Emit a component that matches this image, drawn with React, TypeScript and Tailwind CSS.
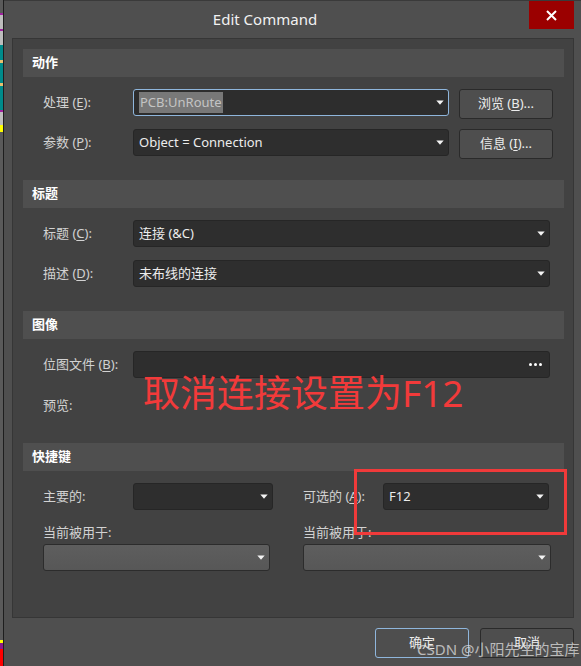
import React from 'react';

const Arrow = () => (
  <svg width="8" height="5" viewBox="0 0 8 5" className="shrink-0">
    <path d="M0.3 0.4h7.4L4 4.7z" fill="#f4f4f4" />
  </svg>
);

const Mn = ({ pre, k, post = ':' }: { pre: string; k: string; post?: string }) => (
  <span>
    {pre} (<span className="underline underline-offset-2">{k}</span>){post}
  </span>
);

const Select = ({
  width,
  value,
  focused,
  disabled,
  selected,
  dots,
}: {
  width: string;
  value?: string;
  focused?: boolean;
  disabled?: boolean;
  selected?: boolean;
  dots?: boolean;
}) => (
  <div
    className={`flex h-[27px] items-center justify-between rounded-[3px] border pl-[5px] pr-[4px] text-[13px] ${width} ${
      focused
        ? 'border-[#8fb6dc] bg-[#2d2d2d]'
        : disabled
        ? 'border-[#2c2c2c] bg-gradient-to-b from-[#5e5e5e] to-[#575757]'
        : 'border-[#262626] bg-[#2e2e2e]'
    }`}
  >
    <span
      className={`leading-[21px] ${selected ? 'bg-[#787878] px-px text-[#c4c4c4]' : 'text-[#ececec]'}`}
    >
      {value}
    </span>
    {dots ? (
      <span className="flex gap-[2px] pr-[3px]">
        <span className="h-[3px] w-[3px] rounded-full bg-white" />
        <span className="h-[3px] w-[3px] rounded-full bg-white" />
        <span className="h-[3px] w-[3px] rounded-full bg-white" />
      </span>
    ) : (
      <Arrow />
    )}
  </div>
);

const Button = ({ children, focused, className = '' }: { children: React.ReactNode; focused?: boolean; className?: string }) => (
  <div
    className={`flex h-[30px] w-[94px] items-center justify-center rounded-[3px] border bg-[#4e4e4e] text-[13px] text-[#ececec] ${
      focused ? 'border-[#8fb6dc]' : 'border-[#2a2a2a]'
    } ${className}`}
  >
    {children}
  </div>
);

const Header = ({ title, className = '' }: { title: string; className?: string }) => (
  <div className={`flex h-[28px] items-center bg-[#4f4f4f] pl-[9px] text-[13px] font-bold text-white ${className}`}>
    {title}
  </div>
);

const Label = ({ children, className = 'w-[90px]' }: { children: React.ReactNode; className?: string }) => (
  <div className={`flex h-[27px] shrink-0 items-center text-[13px] text-[#d2d2d2] ${className}`}>{children}</div>
);

const AppStrip = () => (
  <div className="flex w-[3px] flex-col">
    <div className="h-[13px] bg-[#5a5a5a]" />
    <div className="h-[2px] bg-[#a020a0]" />
    <div className="h-[14px] bg-[#bdbdbd]" />
    <div className="h-[2px] bg-[#a020a0]" />
    <div className="h-[14px] bg-[#bdbdbd]" />
    <div className="h-[15px] bg-[#008b8b]" />
    <div className="h-[3px] bg-[#e8c070]" />
    <div className="h-[20px] bg-[#008b8b]" />
    <div className="h-[3px] bg-[#e8c070]" />
    <div className="h-[24px] bg-[#008b8b]" />
    <div className="h-[2px] bg-[#a020a0]" />
    <div className="h-[13px] bg-[#bdbdbd]" />
    <div className="h-[7px] bg-[#ffff00]" />
    <div className="flex-1 bg-[#5a5a5a]" />
    <div className="h-[3px] bg-[#ffff00]" />
    <div className="h-[6px] bg-[#8a1a8a]" />
    <div className="h-[17px] bg-[#ff0000]" />
  </div>
);

export default function App() {
  return (
    <div className="relative flex h-[666px] w-[581px] overflow-hidden bg-[#4f4f4f] font-['Noto_Sans','Noto_Sans_CJK_SC',sans-serif]">
      <AppStrip />
      <div className="w-px bg-[#1e1e1e]" />
      <div className="flex flex-1 flex-col border-t border-[#3a3a3a] pl-2 pr-[7px]">
        {/* title bar */}
        <div className="flex h-[37px] items-start">
          <div className="flex h-[36px] flex-1 items-center justify-center pr-[11px] text-[15px] text-[#f2f2f2]">
            Edit Command
          </div>
          <div className="flex h-[28px] w-[45px] items-center justify-center bg-[#9b0000]">
            <svg width="11" height="11" viewBox="0 0 11 11">
              <path d="M1 1l9 9M10 1l-9 9" stroke="#fff" strokeWidth="2" />
            </svg>
          </div>
        </div>

        {/* main panel */}
        <div className="h-[580px] border border-[#363636] bg-[#424242] pl-[10px] pr-[9px] pt-[10px]">
          <Header title="动作" />
          <div className="mt-3 flex items-start pl-5">
            <Label><Mn pre="处理" k="E" /></Label>
            <Select width="w-[316px]" value="PCB:UnRoute" focused selected />
            <Button className="ml-[10px]"><Mn pre="浏览" k="B" post="..." /></Button>
          </div>
          <div className="mt-[10px] flex items-start pl-5">
            <Label><Mn pre="参数" k="P" /></Label>
            <Select width="w-[316px]" value="Object = Connection" />
            <Button className="ml-[10px]"><Mn pre="信息" k="I" post="..." /></Button>
          </div>

          <Header title="标题" className="mt-[21px]" />
          <div className="mt-3 flex items-start pl-5">
            <Label><Mn pre="标题" k="C" /></Label>
            <Select width="w-[417px]" value="连接 (&C)" />
          </div>
          <div className="mt-[13px] flex items-start pl-5">
            <Label><Mn pre="描述" k="D" /></Label>
            <Select width="w-[417px]" value="未布线的连接" />
          </div>

          <Header title="图像" className="mt-[24px]" />
          <div className="mt-3 flex items-start pl-5">
            <Label><Mn pre="位图文件" k="B" /></Label>
            <Select width="w-[417px]" dots />
          </div>
          <div className="mt-[17px] flex h-[21px] items-center pl-5 text-[13px] text-[#d2d2d2]">预览:</div>

          <Header title="快捷键" className="mt-[27px]" />
          <div className="mt-3 flex items-start pl-5">
            <Label>主要的:</Label>
            <Select width="w-[140px]" />
            <Label className="ml-[30px] w-[80px]"><Mn pre="可选的" k="A" /></Label>
            <Select width="w-[166px]" value="F12" />
          </div>
          <div className="mt-[13px] flex pl-5 text-[13px] text-[#d2d2d2]">
            <div className="w-[260px]">当前被用于:</div>
            <div>当前被用于:</div>
          </div>
          <div className="mt-px flex pl-5">
            <Select width="w-[227px]" disabled />
            <div className="ml-[33px]">
              <Select width="w-[248px]" disabled />
            </div>
          </div>
        </div>

        {/* footer buttons */}
        <div className="mt-[10px] flex justify-end gap-[11px] pr-0">
          <Button focused>确定</Button>
          <Button>取消</Button>
        </div>
      </div>

      {/* annotations */}
      <div className="absolute left-[143px] top-[374px] whitespace-nowrap text-[37px] leading-none text-[#f23a3a]">
        取消连接设置为F12
      </div>
      <div className="absolute left-[354px] top-[469px] h-[66px] w-[213px] border-[3px] border-[#f03a3a]" />
      <div className="absolute left-[417px] top-[640px] whitespace-nowrap text-[15px] leading-[18px] text-[#e0e0e0]/75">
        CSDN @小阳先生的宝库
      </div>
    </div>
  );
}
